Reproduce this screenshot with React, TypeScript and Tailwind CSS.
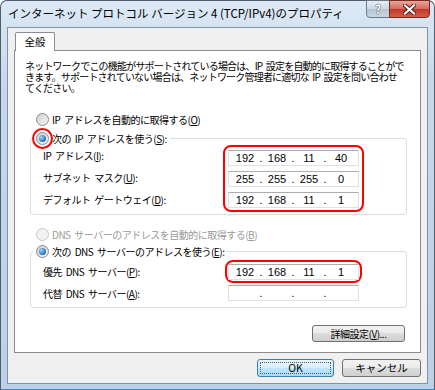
import { Fragment } from "react";

function Radio({ checked, disabled }: { checked?: boolean; disabled?: boolean }) {
  return (
    <span
      className={
        disabled
          ? "w-[13px] h-[13px] rounded-full border border-[#c8c8c8] bg-[#f2f2f2] flex items-center justify-center shrink-0"
          : "w-[13px] h-[13px] rounded-full border border-[#8b8b8b] bg-[linear-gradient(135deg,#cfcfcf,#f7f7f7)] flex items-center justify-center shrink-0"
      }
    >
      {checked && (
        <span className="w-[7px] h-[7px] rounded-full bg-[radial-gradient(circle_at_35%_35%,#9ad8ff,#1b62b4_75%)]" />
      )}
    </span>
  );
}

function IpField({ parts }: { parts?: string[] }) {
  const p = parts ?? ["", "", "", ""];
  return (
    <div className="w-[131px] h-[16px] bg-white border border-[#dde1e7] border-t-[#abadb3] flex items-center text-[11px] leading-none font-['Liberation_Sans',sans-serif] text-black tracking-normal [word-spacing:0]">
      {p.map((v, i) => (
        <Fragment key={i}>
          <span className="w-[32px] text-center">{v}</span>
          {i < 3 && <span className="w-0 flex justify-center">.</span>}
        </Fragment>
      ))}
    </div>
  );
}

function Key({ k }: { k: string }) {
  return (
    <>
      (<span className="underline">{k}</span>)
    </>
  );
}

export default function App() {
  return (
    <div className="w-[435px] h-[390px] bg-white font-['Noto_Sans_CJK_JP',sans-serif] text-black">
      <div className="h-full flex flex-col rounded-t-[7px] border border-[#4f5d6d] border-b-[#2f8fd0] bg-[linear-gradient(180deg,#dde9f5_0%,#c6d9ec_20%,#bcd1e8_100%)] px-[6px] pb-[5px]">
        {/* title bar */}
        <div className="h-[26px] flex items-start justify-between">
          <span className="mt-[5px] ml-[1px] text-[11.5px] leading-[14px] whitespace-nowrap">
            インターネット プロトコル バージョン 4 (TCP/IPv4)のプロパティ
          </span>
          <div className="flex -mt-px -mr-[2px]">
            <div className="w-[24px] h-[18px] rounded-bl-[4px] border border-[#6b7889] bg-[linear-gradient(180deg,#e6edf5_0%,#cdd8e5_50%,#b5c4d6_51%,#c9d6e4_100%)] flex items-center justify-center text-[12px] font-bold leading-none text-white [text-shadow:0_0_1px_#334,0_0_1px_#334]">
              ?
            </div>
            <div className="w-[41px] h-[18px] -ml-px rounded-br-[4px] border border-[#7a2a22] bg-[linear-gradient(180deg,#e7a79b_0%,#d46a5b_50%,#c0392b_51%,#d65c45_100%)] flex items-center justify-center">
              <svg width="13" height="11" viewBox="0 0 13 11">
                <path d="M2 1.5 L11 9.5 M11 1.5 L2 9.5" stroke="#4a1a14" strokeWidth="4" strokeLinecap="square" />
                <path d="M2 1.5 L11 9.5 M11 1.5 L2 9.5" stroke="#ffffff" strokeWidth="2.2" strokeLinecap="square" />
              </svg>
            </div>
          </div>
        </div>

        {/* client */}
        <div className="flex-1 flex flex-col bg-[#f0f0f0] border border-[#7f93a8] px-[6px] pt-[4px]">
          <div className="flex">
            <div className="ml-[1px] w-[40px] h-[19px] -mb-px relative z-10 bg-white border border-b-0 border-[#898c95] rounded-t-[2px] flex items-center justify-center text-[10.5px] leading-none">
              全般
            </div>
          </div>
          <div className="h-[303px] bg-white border border-[#898c95] flex flex-col text-[10px] tracking-[-0.5px] [word-spacing:2px]">
            <p className="pl-[10px] pt-[9px] leading-[11px] whitespace-nowrap tracking-[-0.8px]">
              ネットワークでこの機能がサポートされている場合は、IP 設定を自動的に取得することがで
              <br />
              きます。サポートされていない場合は、ネットワーク管理者に適切な IP 設定を問い合わせ
              <br />
              てください。
            </p>

            <div className="mt-[20px] ml-[21px] h-[13px] flex items-center leading-none whitespace-nowrap">
              <Radio />
              <span className="ml-[3px]">
                IP アドレスを自動的に取得する<Key k="O" />
              </span>
            </div>

            <fieldset className="mt-[6px] ml-[15px] mr-[13px] border border-[#d5dfe5] rounded-[3px] pb-[2px]">
              <legend className="ml-[2px] pl-[3px] pr-[3px]">
                <div className="h-[13px] flex items-center leading-none whitespace-nowrap">
                  <span className="relative flex">
                    <Radio checked />
                    <span className="absolute -left-[4px] -top-[4px] w-[21px] h-[21px] rounded-full border-2 border-[#ff0000]" />
                  </span>
                  <span className="ml-[3px]">
                    次の IP アドレスを使う<Key k="S" />:
                  </span>
                </div>
              </legend>
              <div className="flex">
                <div className="w-[192px] pl-[12px] pt-[2px] flex flex-col gap-[6px] whitespace-nowrap">
                  <div className="h-[16px] flex items-center">
                    <span>
                      IP アドレス<Key k="I" />:
                    </span>
                  </div>
                  <div className="h-[16px] flex items-center">
                    <span>
                      サブネット マスク<Key k="U" />:
                    </span>
                  </div>
                  <div className="h-[16px] flex items-center">
                    <span>
                      デフォルト ゲートウェイ<Key k="D" />:
                    </span>
                  </div>
                </div>
                <div className="border-2 border-[#ff0000] rounded-[8px] px-[3px] pt-[3px] pb-[2px] flex flex-col gap-[5px]">
                  <IpField parts={["192", "168", "11", "40"]} />
                  <IpField parts={["255", "255", "255", "0"]} />
                  <IpField parts={["192", "168", "11", "1"]} />
                </div>
              </div>
            </fieldset>

            <div className="mt-[13px] ml-[21px] h-[13px] flex items-center leading-none whitespace-nowrap text-[#9a9a9a]">
              <Radio disabled />
              <span className="ml-[3px]">
                DNS サーバーのアドレスを自動的に取得する<Key k="B" />
              </span>
            </div>

            <fieldset className="mt-[4px] ml-[15px] mr-[13px] border border-[#d5dfe5] rounded-[3px] pb-[6px]">
              <legend className="ml-[2px] pl-[3px] pr-[3px]">
                <div className="h-[13px] flex items-center leading-none whitespace-nowrap">
                  <Radio checked />
                  <span className="ml-[3px]">
                    次の DNS サーバーのアドレスを使う<Key k="E" />:
                  </span>
                </div>
              </legend>
              <div className="mt-[2px] flex items-center whitespace-nowrap">
                <div className="w-[194px] pl-[12px]">
                  優先 DNS サーバー<Key k="P" />:
                </div>
                <div className="border-2 border-[#ff0000] rounded-[8px] px-[1px] pt-[2px] pb-[1px]">
                  <IpField parts={["192", "168", "11", "1"]} />
                </div>
              </div>
              <div className="mt-[2px] flex items-center whitespace-nowrap">
                <div className="w-[197px] pl-[12px]">
                  代替 DNS サーバー<Key k="A" />:
                </div>
                <IpField />
              </div>
            </fieldset>

            <div className="mt-[17px] mr-[15px] self-end">
              <button className="w-[93px] h-[17px] rounded-[3px] border border-[#707070] bg-[linear-gradient(180deg,#f2f2f2_0%,#ebebeb_48%,#dddddd_50%,#cfcfcf_100%)] flex items-center justify-center leading-none whitespace-nowrap">
                詳細設定<Key k="V" />...
              </button>
            </div>
          </div>

          <div className="mt-[6px] flex justify-end gap-[8px] text-[10.5px] leading-none">
            <button className="w-[77px] h-[18px] rounded-[3px] border border-[#3c7fb1] bg-[linear-gradient(180deg,#eaf6fd_0%,#d9f0fc_48%,#bee6fd_50%,#a7d9f5_100%)] p-[2px]">
              <span className="w-full h-full flex items-center justify-center border border-dotted border-[#555]">
                OK
              </span>
            </button>
            <button className="w-[79px] h-[18px] rounded-[3px] border border-[#707070] bg-[linear-gradient(180deg,#f2f2f2_0%,#ebebeb_48%,#dddddd_50%,#cfcfcf_100%)] flex items-center justify-center">
              キャンセル
            </button>
          </div>
        </div>
      </div>
    </div>
  );
}
